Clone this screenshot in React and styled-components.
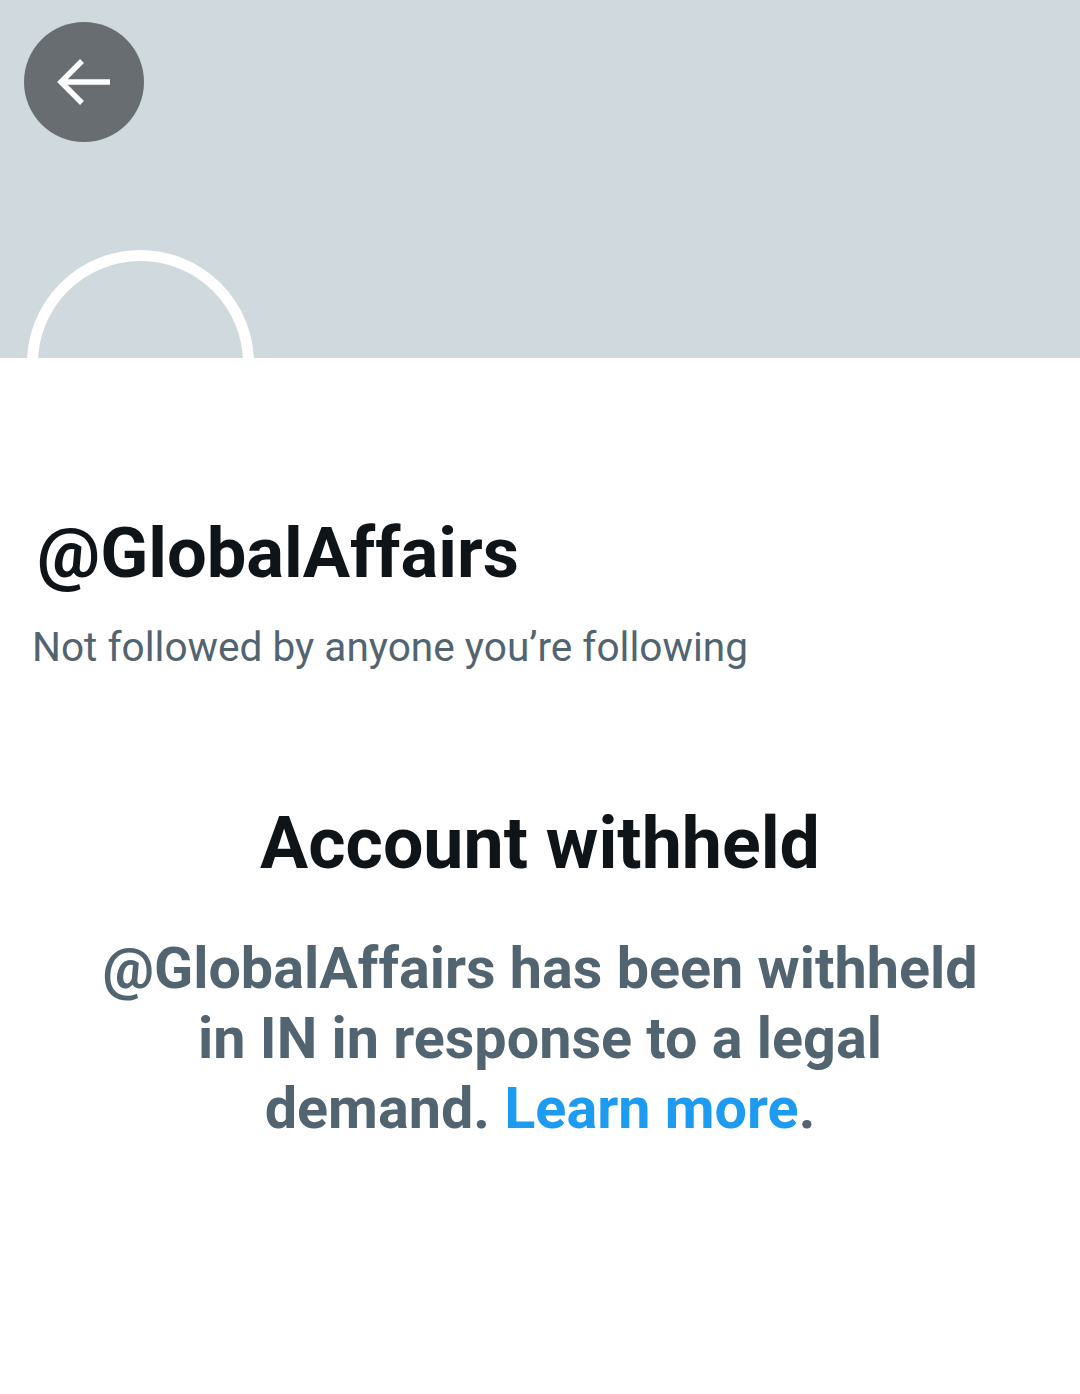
import React from 'react';
import styled, { createGlobalStyle } from 'styled-components';

const GlobalStyle = createGlobalStyle`
    html, body {
        margin: 0;
        padding: 0;
        background: #ffffff;
    }
    body {
        font-family: Roboto, "Liberation Sans", sans-serif;
    }
`;

const Page = styled.div`
    width: 1080px;
    min-height: 1394px;
    background: #ffffff;
    display: flex;
    flex-direction: column;
`;

const Banner = styled.div`
    position: relative;
    height: 358px;
    background: #cfd9de;
    overflow: hidden;
    padding: 22px 24px;
    box-sizing: border-box;
`;

const BackButton = styled.button`
    width: 120px;
    height: 120px;
    border-radius: 50%;
    border: none;
    background: #676d70;
    display: flex;
    align-items: center;
    justify-content: center;
    padding: 0;
`;

const Avatar = styled.div`
    position: absolute;
    left: 27px;
    top: 250px;
    width: 227px;
    height: 227px;
    border-radius: 50%;
    border: 11px solid #ffffff;
    box-sizing: border-box;
    background: #cfd9de;
`;

const Profile = styled.div`
    padding: 160px 32px 0;
`;

const Handle = styled.h1`
    margin: 0 0 0 5px;
    font-size: 70.5px;
    font-weight: 700;
    color: #0f1419;
    line-height: 1;
`;

const Followers = styled.p`
    margin: 34px 0 0;
    font-size: 40.6px;
    font-weight: 400;
    color: #536471;
`;

const Notice = styled.div`
    display: flex;
    flex-direction: column;
    align-items: center;
    padding: 130px 80px 0;
    text-align: center;
`;

const NoticeTitle = styled.h2`
    margin: 0;
    font-size: 71.7px;
    font-weight: 700;
    color: #0f1419;
`;

const NoticeText = styled.p`
    margin: 48px 0 0;
    font-size: 57.5px;
    font-weight: 700;
    line-height: 70px;
    color: #536471;
    max-width: 890px;
`;

const LearnMore = styled.a`
    color: #1d9bf0;
    text-decoration: none;
`;

const ArrowIcon = () => (
    <svg width="54" height="46" viewBox="0 0 54 46">
        <path d="M53 23H4M25 2L4 23l21 21" fill="none" stroke="#ffffff" strokeWidth="5.5" />
    </svg>
);

export default function App() {
    return (
        <Page>
            <GlobalStyle />
            <Banner>
                <BackButton aria-label="Back">
                    <ArrowIcon />
                </BackButton>
                <Avatar />
            </Banner>
            <Profile>
                <Handle>@GlobalAffairs</Handle>
                <Followers>Not followed by anyone you’re following</Followers>
            </Profile>
            <Notice>
                <NoticeTitle>Account withheld</NoticeTitle>
                <NoticeText>
                    @GlobalAffairs has been withheld in IN in response to a legal demand. <LearnMore href="#">Learn more</LearnMore>.
                </NoticeText>
            </Notice>
        </Page>
    );
}
